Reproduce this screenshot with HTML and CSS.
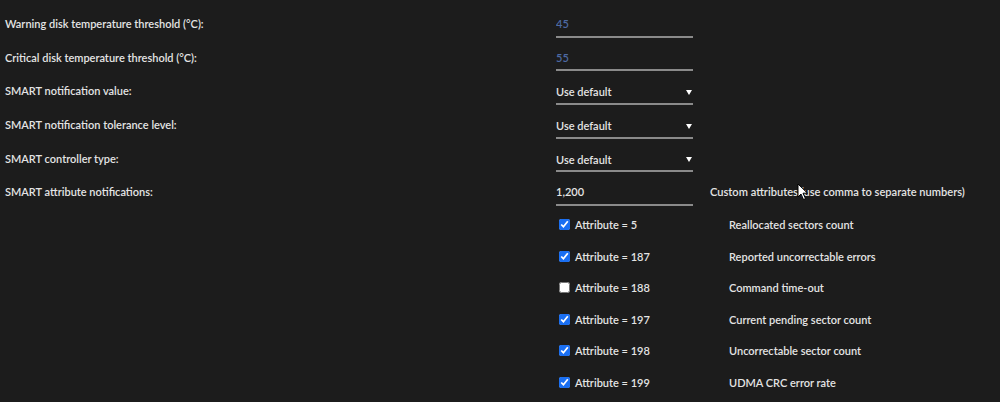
FILE: index.html
```html
<!DOCTYPE html>
<html lang="en">
  <head>
    <meta charset="UTF-8" />
    <meta name="viewport" content="width=device-width, initial-scale=1.0" />
    <title>Disk Settings</title>
    <link rel="stylesheet" href="styles.css">
  </head>
  <body>
    <form class="settings">
      <div class="row">
        <label for="warning">Warning disk temperature threshold (&deg;C):</label>
        <input type="text" id="warning" class="field" placeholder="45" />
      </div>

      <div class="row">
        <label for="critical">Critical disk temperature threshold (&deg;C):</label>
        <input type="text" id="critical" class="field" placeholder="55" />
      </div>

      <div class="row">
        <label for="smValue">SMART notification value:</label>
        <div class="select-wrap">
          <select id="smValue" class="field">
            <option selected>Use default</option>
            <option>Raw</option>
            <option>Normalized</option>
          </select>
        </div>
      </div>

      <div class="row">
        <label for="smLevel">SMART notification tolerance level:</label>
        <div class="select-wrap">
          <select id="smLevel" class="field">
            <option selected>Use default</option>
            <option>Absolute</option>
            <option>Relative</option>
          </select>
        </div>
      </div>

      <div class="row">
        <label for="smType">SMART controller type:</label>
        <div class="select-wrap">
          <select id="smType" class="field">
            <option selected>Use default</option>
            <option>ATA</option>
            <option>SAT</option>
          </select>
        </div>
      </div>

      <div class="row">
        <label for="smCustom">SMART attribute notifications:</label>
        <input type="text" id="smCustom" class="field" value="1,200" />
        <span class="hint">Custom attributes (use comma to separate numbers)</span>
      </div>

      <div class="attributes">
        <label class="attr"><input type="checkbox" checked /><span class="attr-id">Attribute = 5</span><span class="attr-name">Reallocated sectors count</span></label>
        <label class="attr"><input type="checkbox" checked /><span class="attr-id">Attribute = 187</span><span class="attr-name">Reported uncorrectable errors</span></label>
        <label class="attr"><input type="checkbox" /><span class="attr-id">Attribute = 188</span><span class="attr-name">Command time-out</span></label>
        <label class="attr"><input type="checkbox" checked /><span class="attr-id">Attribute = 197</span><span class="attr-name">Current pending sector count</span></label>
        <label class="attr"><input type="checkbox" checked /><span class="attr-id">Attribute = 198</span><span class="attr-name">Uncorrectable sector count</span></label>
        <label class="attr"><input type="checkbox" checked /><span class="attr-id">Attribute = 199</span><span class="attr-name">UDMA CRC error rate</span></label>
      </div>
    </form>

    <!-- mouse pointer -->
    <svg class="pointer" width="12" height="18" viewBox="0 0 12 18">
      <path d="M1 1 L1 14 L4 11 L6.5 16.5 L8.5 15.6 L6 10.2 L10.5 10.2 Z" fill="#fff" stroke="#000" stroke-width="1" />
    </svg>
  </body>
</html>
```

FILE: styles.css
```css
body {
  margin: 0;
  background-color: #1c1c1c;
  color: #e4e4e4;
  font-family: Lato, "Open Sans", sans-serif;
  font-size: 11px;
  font-weight: 600;
}

.settings {
  padding: 8px 0 0 5px;
}

.row {
  display: flex;
  align-items: center;
  height: 33.6px;
}

.row label {
  width: 551px;
  flex-shrink: 0;
  padding-bottom: 2px;
}

.field {
  box-sizing: border-box;
  width: 137px;
  height: 26px;
  padding: 0;
  margin: 0;
  background: transparent;
  border: none;
  border-bottom: 2px solid #8a8a8a;
  color: #e4e4e4;
  font: inherit;
  outline: none;
}

.field::placeholder {
  color: #4d6aa3;
}

select.field {
  padding-top: 2px;
  appearance: none;
  -webkit-appearance: none;
  cursor: pointer;
}

.select-wrap {
  position: relative;
}

/* small white arrow at the right of the select */
.select-wrap::after {
  content: "";
  position: absolute;
  right: 1px;
  top: 11px;
  border-left: 3px solid transparent;
  border-right: 3px solid transparent;
  border-top: 5px solid #fff;
  pointer-events: none;
}

.hint {
  margin-left: 17px;
  padding-bottom: 2px;
  font-size: 11.1px;
}

.attributes {
  margin-top: -0.5px;
  padding-left: 551px;
}

.attr {
  display: flex;
  align-items: center;
  height: 31.5px;
}

.attr input[type='checkbox'] {
  width: 11px;
  height: 11px;
  margin: 0 5px 0 3px;
  accent-color: #1a6ff2;
}

.attr-id {
  width: 154px;
}

.pointer {
  position: absolute;
  left: 797px;
  top: 183px;
}
```
